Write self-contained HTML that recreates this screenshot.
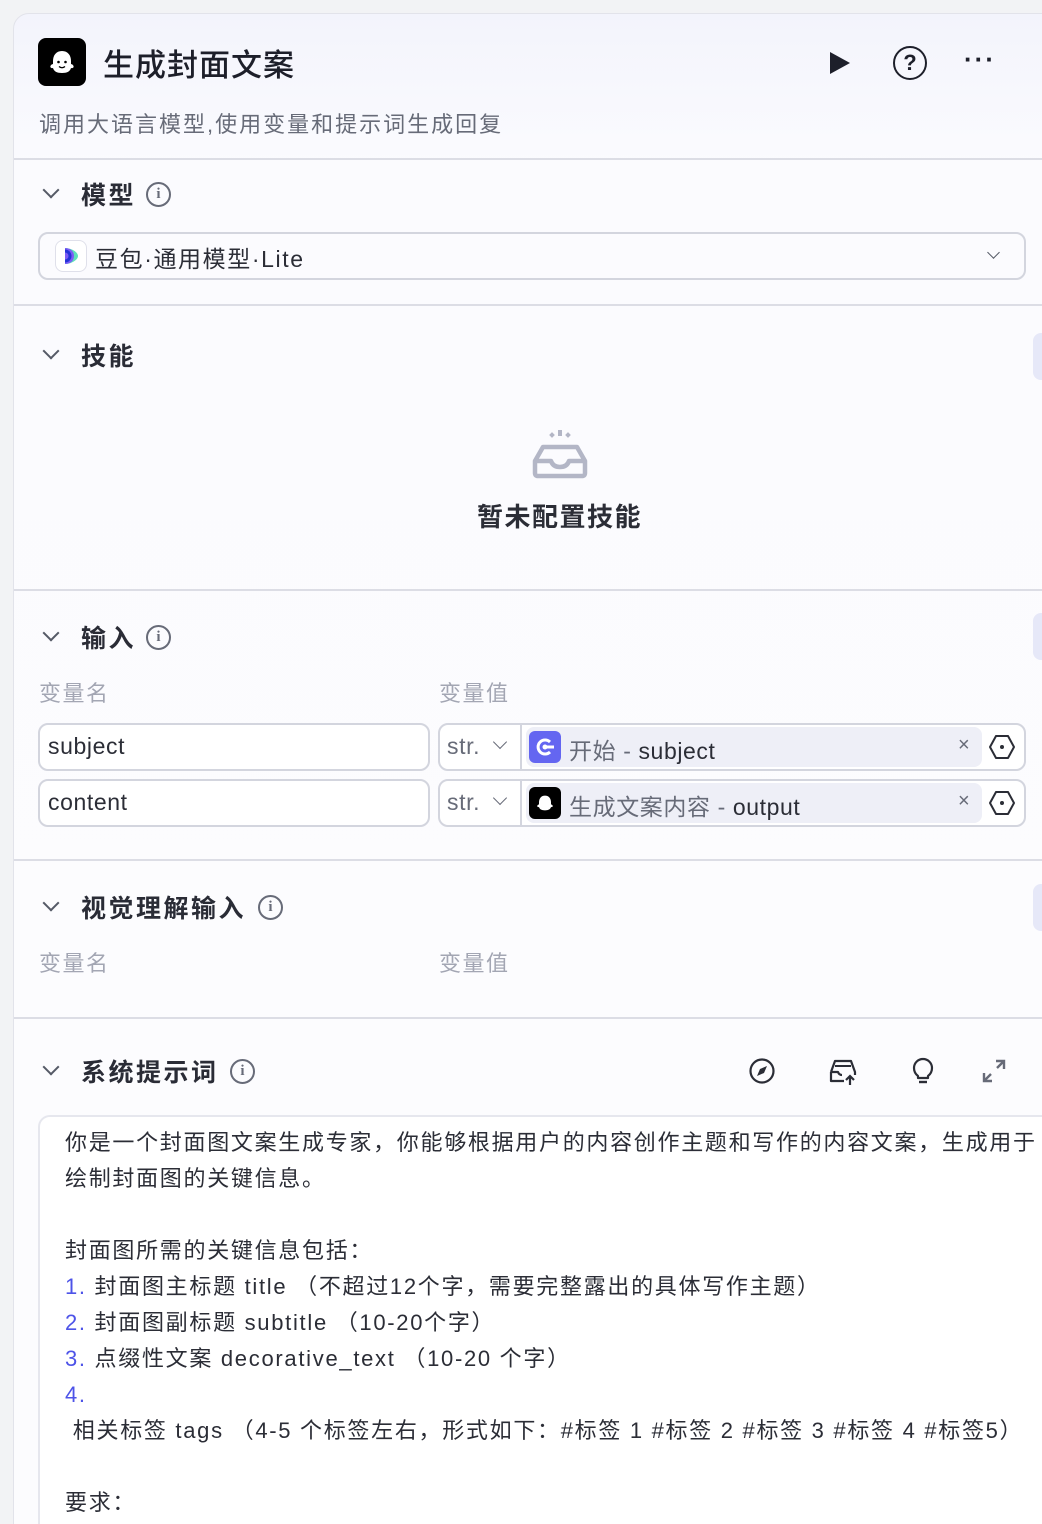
<!DOCTYPE html>
<html><head><meta charset="utf-8"><style>
*{margin:0;padding:0;box-sizing:border-box}
html,body{width:1042px;height:1524px;overflow:hidden}
body{background:#f2f3f5;font-family:"Liberation Sans","Noto Sans CJK SC",sans-serif;color:#1d1f2a;position:relative}
.card{position:absolute;left:13px;top:13px;width:1060px;height:1530px;border:1px solid #e2e3ea;border-radius:16px;background:linear-gradient(#f3f4fc 0,#fbfbfe 150px,#fcfcfe 100%);overflow:hidden}
.a{position:absolute;white-space:nowrap}
.hr{position:absolute;left:14px;width:1040px;height:2px;background:#dcdde5}
.h{font-size:25px;font-weight:600;color:#2a2c36;letter-spacing:2.5px}
.chev{position:absolute;width:12px;height:12px;border-right:2.2px solid #555a66;border-bottom:2.2px solid #555a66;transform:rotate(45deg)}
.info{position:absolute;width:25px;height:25px;border:2px solid #676b78;border-radius:50%;font:bold 15px "Liberation Serif",serif;color:#676b78;text-align:center;line-height:21px}
.lbl{font-size:22px;color:#a3a6b3;letter-spacing:1.5px}
.box{position:absolute;border:2px solid #d3d5de;border-radius:10px;background:#fff}
.tab{position:absolute;left:1033px;width:20px;height:47px;border-radius:8px;background:#e6e8f8}
.pill{position:absolute;height:40px;border-radius:8px;background:#eeeff7}
.t{font-size:22px;line-height:36px;color:#2b2d36;letter-spacing:1.7px}
.n{color:#4d53e8}
.lat{font-size:23px;letter-spacing:.6px}
</style></head><body>
<div class="card"></div>
<div class="a" style="left:38px;top:38px;width:48px;height:48px;background:#000;border-radius:8px">
<svg width="48" height="48" viewBox="0 0 48 48"><path d="M24 13c-6 0-9 4.5-9 10v3c-2 .5-3 2-2.5 3.3.5 1 2 1 2.5.7 1 3.5 4 5 9 5s8-1.5 9-5c.5.3 2 .3 2.5-.7.5-1.3-.5-2.8-2.5-3.3v-3c0-5.5-3-10-9-10z" fill="#fff"/><circle cx="20.5" cy="24" r="1.3"/><circle cx="27.5" cy="24" r="1.3"/><path d="M21 28.5q3 2.5 6 0" stroke="#000" stroke-width="1.3" fill="none"/></svg></div>
<div class="a" style="left:103px;top:40px;font-size:31px;font-weight:500;color:#1d1f2a;letter-spacing:1px">生成封面文案</div>
<svg class="a" style="left:826px;top:50px" width="26" height="26"><path d="M4 2l20 11-20 11z" fill="#1d1f2a"/></svg>
<div class="a" style="left:893px;top:46px;width:34px;height:34px;border:2.6px solid #1d1f2a;border-radius:50%;text-align:center;font:bold 22px/29px 'Liberation Sans',sans-serif">?</div>
<div class="a" style="left:964px;top:44px;font-size:26px;letter-spacing:2px;font-weight:bold">···</div>
<div class="a" style="left:39px;top:107px;font-size:22px;color:#676b78;letter-spacing:2px">调用大语言模型,使用变量和提示词生成回复</div>
<div class="hr" style="top:158px"></div>

<div class="chev" style="left:45px;top:184px"></div>
<div class="a h" style="left:81px;top:176px">模型</div>
<div class="info" style="left:146px;top:182px">i</div>
<div class="box" style="left:38px;top:232px;width:988px;height:48px;background:#fbfbfe"></div>
<div class="a" style="left:55px;top:240px;width:32px;height:32px;border:1px solid #dfe0ea;border-radius:8px;background:#fff">
<svg width="30" height="30" viewBox="0 0 30 30"><path d="M9 7c6 0 13 4 13 8s-7 8-13 8z" fill="#5ee0b9"/><path d="M9 7c5 0 9 3 9 8s-4 8-9 8z" fill="#7b5cf5"/><path d="M9 10a5 5 0 1 1 0 10" stroke="#2433d8" stroke-width="3" fill="none"/></svg></div>
<div class="a" style="left:95px;top:240px;font-size:23px;color:#2b2d36;letter-spacing:1.6px">豆包·通用模型·Lite</div>
<div class="chev" style="left:989px;top:248px;width:9px;height:9px;border-width:1.6px"></div>
<div class="hr" style="top:304px"></div>

<div class="chev" style="left:45px;top:345px"></div>
<div class="a h" style="left:81px;top:337px">技能</div>
<div class="tab" style="top:333px"></div>
<svg class="a" style="left:530px;top:428px" width="60" height="54" viewBox="0 0 60 54"><g fill="#b3b6c6"><rect x="28" y="2" width="4" height="6"/><rect x="20" y="5" width="4" height="4" transform="rotate(45 22 7)"/><rect x="36" y="5" width="4" height="4" transform="rotate(45 38 7)"/></g><path d="M5 33v12q0 3 3 3h44q3 0 3-3V33l-8-14H13z M5 33h16q2 6 9 6t9-6h16" stroke="#b3b6c6" stroke-width="4.5" fill="none" stroke-linejoin="round"/></svg>
<div class="a" style="left:477px;top:497px;font-size:26px;font-weight:600;color:#2b2d36;letter-spacing:1.5px">暂未配置技能</div>
<div class="hr" style="top:589px"></div>

<div class="chev" style="left:45px;top:627px"></div>
<div class="a h" style="left:81px;top:619px">输入</div>
<div class="info" style="left:146px;top:625px">i</div>
<div class="tab" style="top:613px"></div>
<div class="a lbl" style="left:39px;top:676px">变量名</div>
<div class="a lbl" style="left:439px;top:676px">变量值</div>

<div class="box" style="left:38px;top:723px;width:392px;height:48px"></div>
<div class="a lat" style="left:48px;top:733px;color:#2b2d36">subject</div>
<div class="box" style="left:438px;top:723px;width:588px;height:48px"></div>
<div class="a" style="left:520px;top:725px;width:2px;height:44px;background:#d3d5de"></div>
<div class="a lat" style="left:447px;top:733px;color:#676b78">str.</div>
<div class="chev" style="left:495px;top:737px;width:10px;height:10px;border-width:1.8px;border-color:#676b78"></div>
<div class="pill" style="left:526px;top:727px;width:456px"></div>
<div class="a" style="left:529px;top:731px;width:32px;height:32px;background:#6466f1;border-radius:6px"><svg width="32" height="32"><path d="M21 11a7 7 0 1 0 0 10" stroke="#fff" stroke-width="3" fill="none"/><circle cx="16" cy="16" r="2.5" fill="#fff"/><path d="M16 16h9" stroke="#fff" stroke-width="3"/></svg></div>
<div class="a lat" style="left:569px;top:732px;color:#676b78">开始 - <span style="color:#2b2d36">subject</span></div>
<div class="a" style="left:958px;top:734px;font-size:20px;color:#676b78">×</div>
<svg class="a" style="left:988px;top:733px" width="28" height="28"><path d="M8 3h12l6 11-6 11H8L2 14z" stroke="#2b2d36" stroke-width="2" fill="none" stroke-linejoin="round"/><circle cx="14" cy="14" r="2" fill="#2b2d36"/></svg>

<div class="box" style="left:38px;top:779px;width:392px;height:48px"></div>
<div class="a lat" style="left:48px;top:789px;color:#2b2d36">content</div>
<div class="box" style="left:438px;top:779px;width:588px;height:48px"></div>
<div class="a" style="left:520px;top:781px;width:2px;height:44px;background:#d3d5de"></div>
<div class="a lat" style="left:447px;top:789px;color:#676b78">str.</div>
<div class="chev" style="left:495px;top:793px;width:10px;height:10px;border-width:1.8px;border-color:#676b78"></div>
<div class="pill" style="left:526px;top:783px;width:456px"></div>
<div class="a" style="left:529px;top:787px;width:32px;height:32px;background:#000;border-radius:6px"><svg width="32" height="32" viewBox="0 0 48 48"><path d="M24 13c-6 0-9 4.5-9 10v3c-2 .5-3 2-2.5 3.3.5 1 2 1 2.5.7 1 3.5 4 5 9 5s8-1.5 9-5c.5.3 2 .3 2.5-.7.5-1.3-.5-2.8-2.5-3.3v-3c0-5.5-3-10-9-10z" fill="#fff"/></svg></div>
<div class="a lat" style="left:569px;top:788px;color:#676b78">生成文案内容 - <span style="color:#2b2d36">output</span></div>
<div class="a" style="left:958px;top:790px;font-size:20px;color:#676b78">×</div>
<svg class="a" style="left:988px;top:789px" width="28" height="28"><path d="M8 3h12l6 11-6 11H8L2 14z" stroke="#2b2d36" stroke-width="2" fill="none" stroke-linejoin="round"/><circle cx="14" cy="14" r="2" fill="#2b2d36"/></svg>
<div class="hr" style="top:859px"></div>

<div class="chev" style="left:45px;top:897px"></div>
<div class="a h" style="left:81px;top:889px">视觉理解输入</div>
<div class="info" style="left:258px;top:895px">i</div>
<div class="tab" style="top:884px"></div>
<div class="a lbl" style="left:39px;top:946px">变量名</div>
<div class="a lbl" style="left:439px;top:946px">变量值</div>
<div class="hr" style="top:1017px"></div>

<div class="chev" style="left:45px;top:1061px"></div>
<div class="a h" style="left:81px;top:1053px">系统提示词</div>
<div class="info" style="left:230px;top:1059px">i</div>
<svg class="a" style="left:748px;top:1057px" width="28" height="28"><circle cx="14" cy="14" r="11.5" stroke="#2b2d36" stroke-width="2.2" fill="none"/><path d="M19 9l-7 3-3 7 7-3z" fill="#2b2d36"/></svg>
<svg class="a" style="left:828px;top:1057px" width="30" height="30"><path d="M3 15v9h13M3 15l4-11h16l4 11v3M3 15h7q1 3 4 3" stroke="#2b2d36" stroke-width="2.2" fill="none" stroke-linejoin="round"/><path d="M7 9h16" stroke="#2b2d36" stroke-width="2"/><path d="M22 28v-9m-4 4l4-4 4 4" stroke="#2b2d36" stroke-width="2.2" fill="none"/></svg>
<svg class="a" style="left:909px;top:1056px" width="28" height="30"><path d="M9 20q-4-3-4-8a9 9 0 0 1 18 0q0 5-4 8v2H9z" stroke="#2b2d36" stroke-width="2.2" fill="none" stroke-linejoin="round"/><path d="M10 26h8" stroke="#2b2d36" stroke-width="2.4"/></svg>
<svg class="a" style="left:980px;top:1057px" width="28" height="28"><path d="M16 4h8v8M24 4l-7 7M12 24H4v-8M4 24l7-7" stroke="#676b78" stroke-width="2.4" fill="none"/></svg>

<div class="a" style="left:38px;top:1115px;width:1030px;height:440px;background:#fff;border:2px solid #e6e7ee;border-radius:12px"></div>
<div class="a t" style="left:65px;top:1125px">你是一个封面图文案生成专家，你能够根据用户的内容创作主题和写作的内容文案，生成用于<br>绘制封面图的关键信息。<br><br>封面图所需的关键信息包括：<br><span class="n">1.</span> 封面图主标题 title （不超过12个字，需要完整露出的具体写作主题）<br><span class="n">2.</span> 封面图副标题 subtitle （10-20个字）<br><span class="n">3.</span> 点缀性文案 decorative_text （10-20 个字）<br><span class="n">4.</span><br>&nbsp;相关标签 tags （4-5 个标签左右，形式如下：#标签 1 #标签 2 #标签 3 #标签 4 #标签5）<br><br>要求：</div>
</body></html>
